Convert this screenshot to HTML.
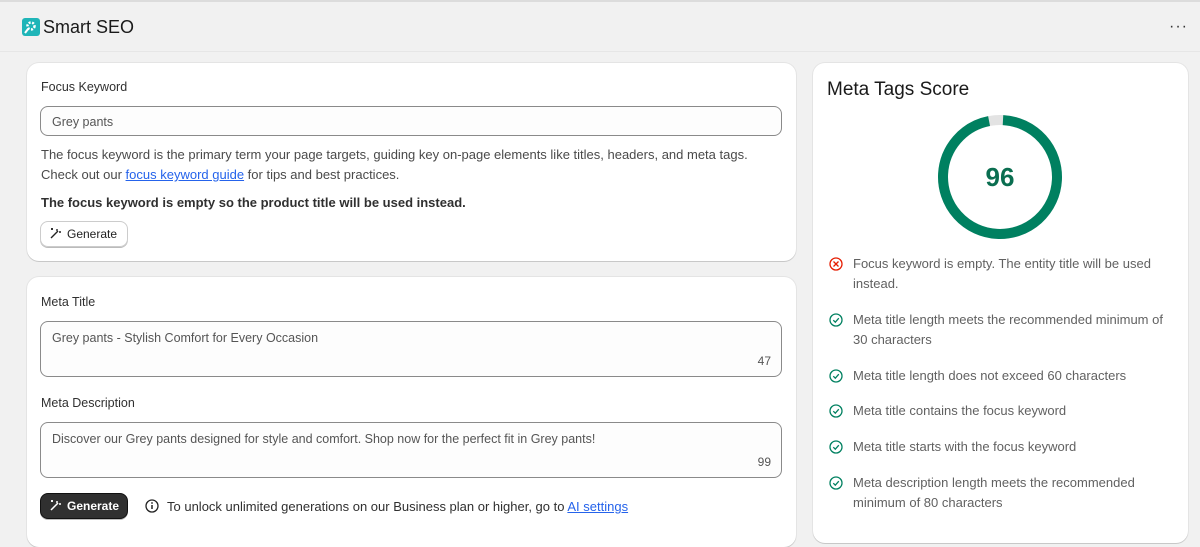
<!DOCTYPE html>
<html><head><meta charset="utf-8"><style>
*{box-sizing:border-box;margin:0;padding:0}
body{width:1200px;height:530px;overflow:hidden;background:#f1f1f1;font-family:"Liberation Sans",sans-serif;color:#303030;position:relative}
.top{position:absolute;left:0;top:0;width:1200px;height:2px;background:#dcdcdc}
.hdr{position:absolute;left:0;top:2px;width:1200px;height:50px;border-bottom:1px solid #e6e6e6}
.logo{position:absolute;left:22px;top:18px;width:18px;height:18px;background:#1fb5b8;border-radius:3px}
.title{position:absolute;left:43px;top:17px;font-size:18px;color:#1a1a1a}
.dots{position:absolute;right:12px;top:18px;font-size:16px;color:#333;letter-spacing:1px}
.card{position:absolute;background:#fff;border-radius:12px;box-shadow:0 1px 0 rgba(0,0,0,.12),0 0 0 1px rgba(0,0,0,.05)}
.lbl{position:absolute;font-size:12.5px;color:#303030}
.inp{position:absolute;border:1px solid #8a8a8a;border-radius:8px;background:#fdfdfd;font-size:12.5px;color:#555;padding:8px 11px}
.txt{position:absolute;font-size:13px;color:#4a4a4a;line-height:20px;white-space:nowrap}
a{color:#2563eb;text-decoration:underline}
.btn{position:absolute;border:1px solid #ccc;border-radius:8px;font-size:12px;color:#222;height:26px;padding:5px 10px 0 26px;box-shadow:0 1px 0 #bbb}
.btn.dark{background:#303030;color:#fff;border-color:#111;font-weight:bold}
.item{position:absolute;left:40px;font-size:13px;color:#616161;line-height:20px;width:322px}
.ic{position:absolute;left:-24px;top:3px}
</style></head><body>
<div class="top"></div>
<div class="hdr"></div>
<div class="logo"><svg width="18" height="18" viewBox="0 0 18 18"><circle cx="9" cy="8" r="3.5" fill="none" stroke="#fff" stroke-width="2.5" stroke-dasharray="2 1.5"/><path d="M6 11 L3 15" stroke="#fff" stroke-width="2"/></svg></div>
<div class="title">Smart SEO</div>
<div class="dots">···</div>

<div class="card" style="left:27px;top:63px;width:769px;height:198px">
<div class="lbl" style="left:14px;top:17px">Focus Keyword</div>
<div class="inp" style="left:13px;top:43px;width:742px;height:30px">Grey pants</div>
<div class="txt" style="left:14px;top:82px">The focus keyword is the primary term your page targets, guiding key on-page elements like titles, headers, and meta tags.<br>Check out our <a>focus keyword guide</a> for tips and best practices.</div>
<div class="txt" style="left:14px;top:130px;font-weight:bold;color:#303030">The focus keyword is empty so the product title will be used instead.</div>
<div class="btn" style="left:13px;top:158px"><svg style="position:absolute;left:8px;top:5px" width="13" height="13" viewBox="0 0 13 13"><path d="M2 11 L9 4 M8 2 L8 4 M10 5 L12 5 M2 2h2M3 1v2" stroke="#222" stroke-width="1.4" fill="none"/></svg>Generate</div>
</div>

<div class="card" style="left:27px;top:277px;width:769px;height:270px">
<div class="lbl" style="left:14px;top:18px">Meta Title</div>
<div class="inp" style="left:13px;top:44px;width:742px;height:56px;padding-top:9px">Grey pants - Stylish Comfort for Every Occasion<span style="position:absolute;right:10px;bottom:8px;font-size:12px">47</span></div>
<div class="lbl" style="left:14px;top:119px">Meta Description</div>
<div class="inp" style="left:13px;top:145px;width:742px;height:56px;padding-top:9px">Discover our Grey pants designed for style and comfort. Shop now for the perfect fit in Grey pants!<span style="position:absolute;right:10px;bottom:8px;font-size:12px">99</span></div>
<div class="btn dark" style="left:13px;top:216px;height:26px;width:88px"><svg style="position:absolute;left:8px;top:5px" width="13" height="13" viewBox="0 0 13 13"><path d="M2 11 L9 4 M8 2 L8 4 M10 5 L12 5 M2 2h2M3 1v2" stroke="#fff" stroke-width="1.5" fill="none"/></svg>Generate</div>
<div class="txt" style="left:118px;top:220px;color:#303030"><svg style="position:absolute;left:0;top:2px" width="14" height="14" viewBox="0 0 14 14"><circle cx="7" cy="7" r="6" fill="none" stroke="#222" stroke-width="1.3"/><path d="M7 6v4" stroke="#222" stroke-width="1.5"/><circle cx="7" cy="4" r=".9" fill="#222"/></svg><span style="margin-left:22px">To unlock unlimited generations on our Business plan or higher, go to <a>AI settings</a></span></div>
</div>

<div class="card" style="left:813px;top:63px;width:375px;height:480px">
<div style="position:absolute;left:14px;top:16px;font-size:19px;color:#1a1a1a">Meta Tags Score</div>
<svg style="position:absolute;left:124px;top:51px" width="126" height="126" viewBox="0 0 126 126"><circle cx="63" cy="63" r="57" fill="none" stroke="#e3e3e3" stroke-width="10"/><circle cx="63" cy="63" r="57" fill="none" stroke="#008060" stroke-width="10" stroke-dasharray="343.8 358.1" transform="rotate(-87 63 63)"/><text x="63" y="72" text-anchor="middle" font-family="Liberation Sans" font-weight="bold" font-size="26" fill="#0a6e50">96</text></svg>
<div class="item" style="top:191px"><svg class="ic" width="14" height="14" viewBox="0 0 14 14"><circle cx="7" cy="7" r="6" fill="none" stroke="#e51c00" stroke-width="1.3"/><path d="M4.5 4.5l5 5M9.5 4.5l-5 5" stroke="#e51c00" stroke-width="1.3"/></svg>Focus keyword is empty. The entity title will be used instead.</div>
<div class="item" style="top:247px"><svg class="ic" width="14" height="14" viewBox="0 0 14 14"><circle cx="7" cy="7" r="6" fill="none" stroke="#008060" stroke-width="1.3"/><path d="M4.3 7.2l2 2 3.5-4" stroke="#008060" stroke-width="1.3" fill="none"/></svg>Meta title length meets the recommended minimum of<br>30 characters</div>
<div class="item" style="top:303px"><svg class="ic" width="14" height="14" viewBox="0 0 14 14"><circle cx="7" cy="7" r="6" fill="none" stroke="#008060" stroke-width="1.3"/><path d="M4.3 7.2l2 2 3.5-4" stroke="#008060" stroke-width="1.3" fill="none"/></svg>Meta title length does not exceed 60 characters</div>
<div class="item" style="top:338px"><svg class="ic" width="14" height="14" viewBox="0 0 14 14"><circle cx="7" cy="7" r="6" fill="none" stroke="#008060" stroke-width="1.3"/><path d="M4.3 7.2l2 2 3.5-4" stroke="#008060" stroke-width="1.3" fill="none"/></svg>Meta title contains the focus keyword</div>
<div class="item" style="top:374px"><svg class="ic" width="14" height="14" viewBox="0 0 14 14"><circle cx="7" cy="7" r="6" fill="none" stroke="#008060" stroke-width="1.3"/><path d="M4.3 7.2l2 2 3.5-4" stroke="#008060" stroke-width="1.3" fill="none"/></svg>Meta title starts with the focus keyword</div>
<div class="item" style="top:410px;width:300px"><svg class="ic" width="14" height="14" viewBox="0 0 14 14"><circle cx="7" cy="7" r="6" fill="none" stroke="#008060" stroke-width="1.3"/><path d="M4.3 7.2l2 2 3.5-4" stroke="#008060" stroke-width="1.3" fill="none"/></svg>Meta description length meets the recommended minimum of 80 characters</div>
</div>
</body></html>
